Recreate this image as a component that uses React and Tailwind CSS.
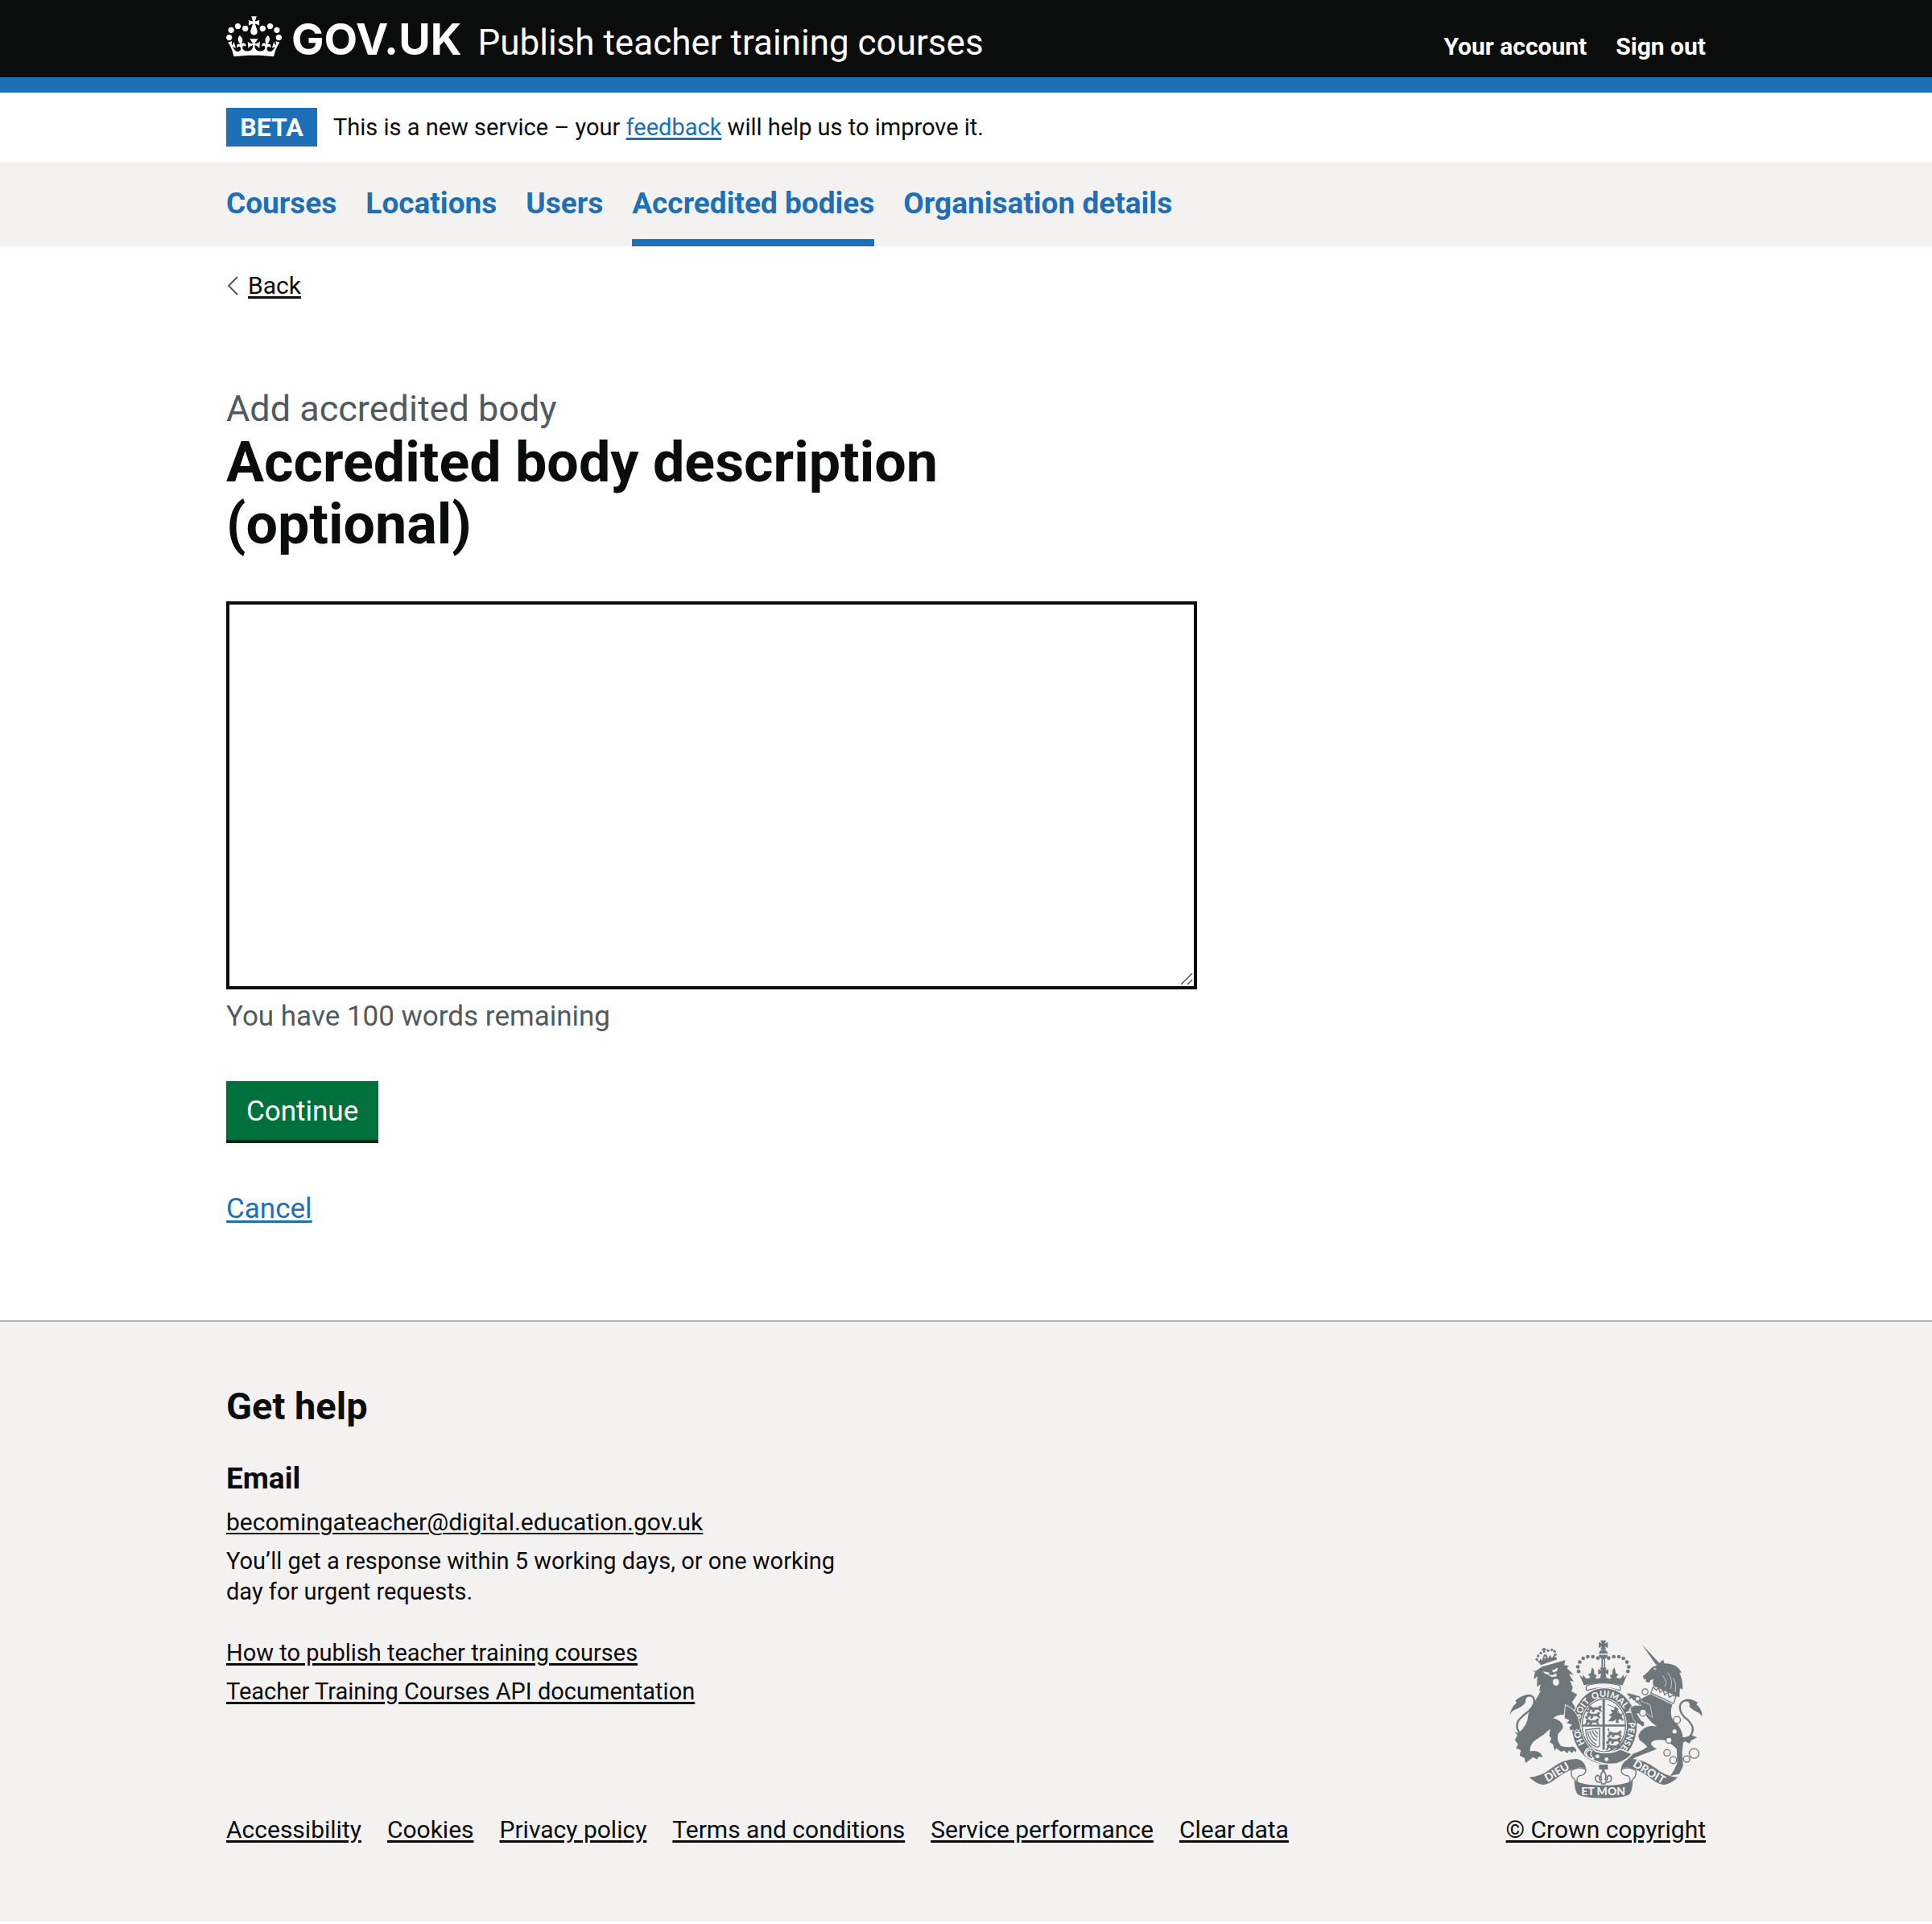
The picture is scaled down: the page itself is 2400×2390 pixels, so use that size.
import React from 'react';

const navItems = ['Courses', 'Locations', 'Users', 'Accredited bodies', 'Organisation details'];
const metaLinks = ['Accessibility', 'Cookies', 'Privacy policy', 'Terms and conditions', 'Service performance', 'Clear data'];

const linkLine = 'underline decoration-[3px] underline-offset-[3px]';
const wrap = 'mx-auto w-full max-w-[1838px]';

function Crown() {
  return (
    <svg aria-hidden="true" viewBox="0 0 132 97" className="h-[51px] w-[69px] shrink-0" fill="currentColor">
      <path fillRule="evenodd" d="M25 30.2c3.5 1.5 7.7-.2 9.1-3.7 1.5-3.6-.2-7.8-3.9-9.2-3.6-1.4-7.6.3-9.1 3.9-1.4 3.5.3 7.5 3.9 9zM9 39.5c3.6 1.5 7.8-.2 9.2-3.7 1.5-3.6-.2-7.8-3.9-9.1-3.6-1.5-7.6.2-9.1 3.8-1.4 3.5.3 7.5 3.8 9zM4.4 57.2c3.5 1.5 7.7-.2 9.1-3.8 1.5-3.6-.2-7.7-3.9-9.1-3.5-1.5-7.6.3-9.1 3.8-1.4 3.5.3 7.6 3.9 9.1zm38.3-21.4c3.5 1.5 7.7-.2 9.1-3.8 1.5-3.6-.2-7.7-3.9-9.1-3.6-1.5-7.6.3-9.1 3.8-1.3 3.6.4 7.7 3.9 9.1zm64.4-5.6c-3.6 1.5-7.8-.2-9.1-3.7-1.5-3.6.2-7.8 3.8-9.2 3.6-1.4 7.7.3 9.2 3.9 1.3 3.5-.4 7.5-3.9 9zm15.9 9.3c-3.6 1.5-7.7-.2-9.1-3.7-1.5-3.6.2-7.8 3.7-9.1 3.6-1.5 7.7.2 9.2 3.8 1.5 3.5-.3 7.5-3.8 9zm4.7 17.7c-3.6 1.5-7.8-.2-9.2-3.8-1.5-3.6.2-7.7 3.9-9.1 3.6-1.5 7.7.3 9.2 3.8 1.3 3.5-.4 7.6-3.9 9.1zM89.3 35.8c-3.6 1.5-7.8-.2-9.2-3.8-1.4-3.6.2-7.7 3.9-9.1 3.6-1.5 7.7.3 9.2 3.8 1.4 3.6-.3 7.7-3.9 9.1zM69.7 17.7l8.9 4.7V9.3l-8.9 2.8c-.2-.3-.5-.6-.9-.9L72.4 0H59.6l3.5 11.2c-.3.3-.6.5-.9.9l-8.8-2.8v13.1l8.8-4.7c.3.3.6.7.9.9l-5 15.4v.1c-.2.8-.4 1.6-.4 2.4 0 4.1 3.1 7.5 7 8.1h.2c.3 0 .7.1 1 .1.4 0 .7 0 1-.1h.2c4-.6 7.1-4.1 7.1-8.1 0-.8-.1-1.7-.4-2.4V34l-5.1-15.4c.4-.2.7-.6 1-.9zM66 92.8c16.9 0 32.8 1.1 47.1 3.2 4-16.9 8.9-26.7 14-33.5l-9.6-3.4c1 4.9 1.1 7.2 0 10.2-1.5-1.4-3-4.3-4.2-8.7L108.6 76c2.8-2 5-3.2 7.5-3.3-4.4 9.4-10 11.9-13.6 11.2-4.3-.8-6.3-4.6-5.6-7.9 1-4.7 5.7-5.9 8-.5 4.3-8.7-3-11.4-7.6-8.8 7.1-7.2 7.9-13.5 2.1-21.1-8 6.1-8.1 12.3-4.5 20.8-4.7-5.4-12.1-2.5-9.5 6.2 3.4-5.2 7.9-2 7.2 3.1-.6 4.3-6.4 7.8-13.5 7.2-10.3-.9-10.9-8-11.2-13.8 2.5-.5 7.1 1.8 11 7.3L80.2 60c-4.1 4.4-8 5.3-12.3 5.4 1.4-4.4 8-11.6 8-11.6H55.5s6.4 7.2 7.9 11.6c-4.2-.1-8-1-12.3-5.4l1.4 16.4c3.9-5.5 8.5-7.7 10.9-7.3-.3 5.8-.9 12.8-11.1 13.8-7.2.6-12.9-2.9-13.5-7.2-.7-5 3.8-8.3 7.1-3.1 2.7-8.7-4.6-11.6-9.4-6.2 3.7-8.5 3.6-14.7-4.6-20.8-5.8 7.6-5 13.9 2.2 21.1-4.7-2.6-11.9.1-7.7 8.8 2.3-5.5 7.1-4.2 8.1.5.7 3.3-1.3 7.1-5.7 7.9-3.5.7-9-1.8-13.5-11.2 2.5.1 4.7 1.3 7.5 3.3l-4.7-15.4c-1.2 4.4-2.7 7.2-4.3 8.7-1.1-3-.9-5.3 0-10.2l-9.5 3.4c5 6.9 9.9 16.7 14 33.5 14.8-2.1 30.8-3.2 47.7-3.2z" />
    </svg>
  );
}

const INK = '#6f777b';
const PAPER = '#f3f2f1';
const pearls = [[372, 126], [353, 121], [334, 121], [317, 127], [304, 141], [297, 159], [300, 176]];
const lionPearls = [[144, 131], [149, 118], [159, 108], [186, 98], [200, 95], [210, 101], [213, 113], [174, 117]];
const chain = [[520, 278, 9], [548, 252, 11], [540, 330, 13], [667, 357, 13], [658, 400, 10], [637, 433, 11], [630, 480, 12], [653, 507, 13], [703, 503, 12], [731, 482, 18]];
// Walking lion charge, drawn from its own origin.
const passant = 'M0 8l8-4 6 5h20l8-7 6 3-5 9 6 9h-7l-6-7-14 1-3 8h-7l2-9-8 1-4 8H-4l5-10zM2 4Q-8-4 2-8';

function Crest() {
  const motto = { fill: PAPER, fontFamily: 'Lato, sans-serif', fontWeight: 900, textAnchor: 'middle' };
  return (
    <svg aria-hidden="true" viewBox="42 58 720 592" className="h-[197px] w-[240px]" fill={INK}>
      {/* royal crown */}
      <path d="M381 60h22l-6 12 12-6v22l-12-6 6 12h-22l6-12-12 6V66l12 6z" />
      <path d="M375 110q2-14 17-15 15 1 17 15zM375 114h34q-1 10-10 13v42h-5v-38h-4v38h-5v-42q-9-3-10-13z" />
      {pearls.map(([x, y]) => (
        <g key={x}>
          <circle cx={x} cy={y} r="7" />
          <circle cx={784 - x} cy={y} r="7" />
        </g>
      ))}
      <path d="M302 186l18 42q72-18 144 0l18-42-13 14-2-12-9 13q-10 3-18-3l9-11-10-4-5-23-8 12 0 14-10 5 6 11q-9 3-18-2l-4-17 11 5v-21l-12 6 6-11h-26l6 11-12-6v21l11-5-4 17q-9 5-18 2l6-11-10-5v-14l-8-12-5 23-10 4 9 11q-8 6-18 3l-9-13-2 12z" />
      <path d="M330 247q-8-18 12-22 50-12 100 0 20 4 12 22-60-20-124 0z" fill={PAPER} stroke={INK} strokeWidth="4" />

      {/* lion */}
      <path d="M138 176l24-17 88-25-4 18 18 4-8 8 26 25-18-3 18 28-14-4 10 27-5 13 22 12-20 28 14 22 8 38 6 38-14 10-16-4-6-12 10-8-20-7 12-9-18-8 10-8q-30-12-56 8 40 12 36 38l-18 22q-6 24 10 44 30 8 42 2 18 2 16 22l-9-7-6 10-12-10-6 11-12-10-12 4-18-14-6 10-6-24-12-8 6-14-8-10 4-26q-24 24-52 40-26 18-24 44 40-6 48 22l-14-2-8 10-14-8-28 22-4-18-18-10 4-20-18-8 8-14-12-16 14-28q34-24 36-68 6-18 16-34l32-56-8 4 6-26-14 10 2-40-14 12 6-34-10 4z" />
      <path d="M166 176l22 4 4 8-16-3zM200 174l22-12-2 12-14 6zM184 188l18 2 14-8 2 12-18 3z" fill={PAPER} />
      <path d="M204 208q12-10 21 0 6 18-9 22-15-4-12-22z" fill={PAPER} />
      <path d="M155 142l62-20 2 10-62 21zM144 134l10 2 4-8 6 8 4-18 8 12 4-20 6 18 8-14 6 12 8-12 4 2-2 12-56 18z" />
      {lionPearls.map(([x, y]) => <circle key={x} cx={x} cy={y} r="5" />)}
      <path d="M166 88h9l-2 5 6-3v9l-6-2 3 9h-10l2-8-6 2v-8l6 2z" />
      <path d="M92 418Q58 390 76 358q16-18 38-34 30-28 16-52-12-12-34 2" fill="none" stroke={INK} strokeWidth="7" />
      <path d="M42 338q8-32 26-44l-4-10q30-24 60-22-26 8-22 30-16 20-38 26-12 4-22 20zM60 402l22 6 30-14-6 18-14 16-8-4z" />

      {/* unicorn */}
      <path d="M536 75l66 70-12 8z" />
      <path d="M590 154l26-22 4 14q50 0 64 36l-8-1q14 26 12 62l-10-4-2 34-96-42q-6-16 0-26l-12 3-4 10-14-4 2-10-8 2-4-12q20-16 34-34z" />
      <path d="M580 163l13 3-10 4z" fill={PAPER} />
      <path d="M612 190q24 26 8 44M632 180q24 30 10 62M652 200q16 24 8 52" fill="none" stroke={PAPER} strokeWidth="2" />
      <path d="M578 234l12 12 8-8 6 16 12-8 5 17 12-8 5 17 12-6 14 2-10 28-84-40z" fill={PAPER} stroke={INK} strokeWidth="4" />
      <path d="M568 260l82 40q-12 34 2 58 42 32 38 90l-4 30 4 50-14 30-34 8 14-22 12-26-2-52q-26-28-48-34-40-4-48 12 2 12 22 22l-54 20-32 14q-8 14-20 16l-4-10 10-22q36-4 64-26-10-14-28-26-14-20 14-42 20-16 50-8-42-30-52-66l-20-22-10-4z" />
      <path d="M690 438q44-24 34-58-10-20-30-34-22-24-14-48 14-22 38-8" fill="none" stroke={INK} strokeWidth="7" />
      <path d="M762 344q-2-30-22-44l4-8q-26-18-50-12 24 8 20 28 20 18 34 22zM672 418l22 4 28-8 20 8-22 12-6 12-18-10-12-2z" />

      {/* garter */}
      <ellipse cx="396" cy="380" rx="125" ry="145" fill={PAPER} />
      <ellipse cx="396" cy="380" rx="121" ry="141" />
      <ellipse cx="394" cy="378" rx="86" ry="103" fill={PAPER} />
      <path id="garter-line" d="M395 487A91 108 0 0 1 395 271A91 108 0 0 1 395 487" fill="none" />
      <g {...motto} fontSize="33">
        <text><textPath href="#garter-line" startOffset="18%">HO</textPath></text>
        <text><textPath href="#garter-line" startOffset="35%">SOIT</textPath></text>
        <text><textPath href="#garter-line" startOffset="48%">QUI</textPath></text>
        <text><textPath href="#garter-line" startOffset="61%">MAL Y</textPath></text>
        <text><textPath href="#garter-line" startOffset="81%">PENSE</textPath></text>
      </g>

      {/* shield */}
      <ellipse cx="394" cy="378" rx="81" ry="98" fill="none" stroke={INK} strokeWidth="4" />
      <path d="M389 280h9v188h-9zM313 374h162v8H313z" />
      {[[338, 302], [332, 326], [328, 350], [412, 396], [410, 420], [406, 444]].map(([x, y]) => (
        <path key={y} d={passant} transform={`translate(${x} ${y})`} stroke={INK} strokeWidth="2" />
      ))}
      <path d="M410 362l14-18-12-4 14-10-8-12 14 2 4-14 12 10-4 12 12 8 10-6-6 14 10 16-14-6-8 2 2 12h-12l2-14-12 8z" />
      <path d="M408 300q44 10 56 62" fill="none" stroke={INK} strokeWidth="3" />
      <path d="M326 394l52-6v66q-8 8-14 2-34-10-38-62z" stroke={INK} strokeWidth="4" fill="none" />
      <path d="M334 399q4 36 32 50M342 397q4 26 26 38M351 396q4 16 19 26M361 395q2 8 11 14" stroke={INK} strokeWidth="4" fill="none" />
      <path d="M322 482q8-28 30-18l12 10q50 14 92-8l44 18q-20 24-56 36-60 10-112-26z" stroke={PAPER} strokeWidth="5" />
      <path d="M328 484q4-20 22-12l-6 14 12 16q-20 4-28-18z" fill="none" stroke={PAPER} strokeWidth="4" />
      <circle cx="370" cy="493" r="7" fill={PAPER} />
      <circle cx="404" cy="504" r="7" fill={PAPER} />

      {/* forelegs resting on the garter */}
      <path d="M250 300q44 18 54 66l4 22-8 10-8-6-6 10-8-8-10 4-4-14 10-8-22-8 12-9-18-8z" stroke={PAPER} strokeWidth="3" />
      <path d="M566 300l-30-12-22-24-30-8-4 6 10 8-4 14 12-8 6 10 16-2 14 20-22-2-20 8 4 16 8 30 8 6-2 14 12-6 16 12 8-4-2-14-10-4-16-26 34-2 24 16z" stroke={PAPER} strokeWidth="2" />
      {chain.map(([x, y, r]) => <circle key={y} cx={x} cy={y} r={r} fill={PAPER} stroke={INK} strokeWidth="4" />)}

      {/* fleur-de-lis pendant */}
      <path d="M376 524h33v18h-10l-7 9-7-9h-9z" />
      <path d="M392 546q-14 16-6 34-4 4-9-2 4-14-8-14-10 6-4 20 6 8 18 4l4 8h11l4-8q12 4 18-4 6-14-4-20-12 0-8 14-5 6-9 2 8-18-7-34z" fill={PAPER} stroke={INK} strokeWidth="5" />

      {/* motto ribbon */}
      {[undefined, 'translate(786 0) scale(-1 1)'].map((flip, i) => (
        <g key={i} transform={flip}>
          <path d="M116 571q48-4 82-34 50-36 96-34 30 6 34 38-14-8-30-6-14 8-20 6-30 10-60 34-30 24-52 24-26-4-50-28z" />
          <path d="M328 541q-2 24-26 24-14 10-4 34M272 548q-2 22 14 32 6 16 4 28M272 548q24-20 54-6" fill="none" stroke={INK} strokeWidth="4" />
        </g>
      ))}
      <path d="M284 582q30 20 109 20t109-20q0 32-10 50-12 16-99 17-87-1-99-17-10-18-10-50z" />
      <g {...motto} fontSize="42">
        <text transform="translate(226 564) rotate(-31)">DIEU</text>
        <text transform="translate(556 563) rotate(31)">DROIT</text>
        <text x="392" y="638">ET MON</text>
      </g>
    </svg>
  );
}

export default function App() {
  return (
    <div className="bg-white font-[Roboto,sans-serif] text-[29px] leading-[38px] text-[#0b0c0c]">
      <header className="border-b-[19px] border-[#1d70b8] bg-[#0b0c0c] pt-5 pb-3.5 text-white">
        <div className={`${wrap} flex items-baseline justify-between`}>
          <div className="flex items-baseline gap-5">
            <a href="#home" className="flex items-start gap-3 font-[Inter,sans-serif] text-[54px] leading-[57px] font-bold">
              <Crown />
              <span className="self-baseline">GOV.UK</span>
            </a>
            <a href="#service" className="text-[44px] leading-[57px]">Publish teacher training courses</a>
          </div>
          <nav aria-label="Account" className="flex gap-9 text-[30px] font-bold">
            <a href="#account">Your account</a>
            <a href="#sign-out">Sign out</a>
          </nav>
        </div>
      </header>

      <div className={`${wrap} flex items-center gap-5 py-[19px] leading-[48px]`}>
        <strong className="w-[113px] bg-[#1d70b8] text-center text-[32px] text-white">BETA</strong>
        <p>
          This is a new service – your <a href="#feedback" className={`${linkLine} text-[#1d70b8]`}>feedback</a> will help us to improve it.
        </p>
      </div>

      <nav aria-label="Primary" className="bg-[#f3f2f1]">
        <ul className={`${wrap} flex gap-9 text-[37px] leading-[48px] font-bold text-[#1d70b8]`}>
          {navItems.map((item) => (
            <li key={item} className={`border-b-[9px] pt-7 pb-5 ${item === 'Accredited bodies' ? 'border-[#1d70b8]' : 'border-transparent'}`}>
              <a href="#section">{item}</a>
            </li>
          ))}
        </ul>
      </nav>

      <div className={wrap}>
        <a href="#back" className="mt-[30px] inline-flex items-center gap-3 text-[30px]">
          <svg aria-hidden="true" viewBox="0 0 15 24" className="h-6 w-[15px]" fill="none" stroke="#505a5f" strokeWidth="2">
            <path d="M14 1L3 12l11 11" />
          </svg>
          <span className={linkLine}>Back</span>
        </a>

        <main className="max-w-[1206px] pt-[104px] pb-[114px]">
          <form onSubmit={(e) => e.preventDefault()}>
            <span className="block text-[45px] leading-[56px] text-[#505a5f]">Add accredited body</span>
            <h1 className="max-w-[1000px] text-[70px] leading-[77px] font-bold">
              <label htmlFor="description">Accredited body description (optional)</label>
            </h1>
            <div className="relative mt-[57px]">
              <textarea id="description" aria-describedby="description-info" className="block h-[482px] w-full resize-none rounded-none border-4 border-[#0b0c0c] bg-white p-2 text-[35px] leading-[48px]" />
              <svg aria-hidden="true" viewBox="0 0 14 14" className="pointer-events-none absolute right-1.5 bottom-1.5 size-3.5" stroke="#555" strokeWidth="1.5">
                <path d="M0 14L14 0M8 14l6-6" />
              </svg>
            </div>
            <p id="description-info" className="mt-[10px] text-[35px] leading-[48px] text-[#505a5f]">You have 100 words remaining</p>
            <button type="submit" className="mt-[56px] block bg-[#00703c] px-[25px] pt-[14px] pb-[11px] text-[35px] leading-[48px] text-white shadow-[0_4px_0_#002d18]">Continue</button>
            <p className="mt-[62px] text-[35px] leading-[48px]">
              <a href="#cancel" className={`${linkLine} text-[#1d70b8]`}>Cancel</a>
            </p>
          </form>
        </main>
      </div>

      <footer className="border-t-2 border-[#b1b4b6] bg-[#f3f2f1] pt-[76px] pb-[95px]">
        <div className={`${wrap} flex items-end justify-between`}>
          <div>
            <h2 className="text-[47px] leading-[57px] font-bold">Get help</h2>
            <h3 className="mt-[38px] text-[37px] leading-[48px] font-bold">Email</h3>
            <ul className="mt-[11px] flex max-w-[800px] flex-col gap-[10px]">
              <li><a href="mailto:becomingateacher@digital.education.gov.uk" className="text-[30px] underline decoration-2 underline-offset-[3px]">becomingateacher@digital.education.gov.uk</a></li>
              <li>You’ll get a response within 5 working days, or one working day for urgent requests.</li>
            </ul>
            <ul className="mt-[38px] flex flex-col gap-[10px]">
              <li><a href="#guide" className={linkLine}>How to publish teacher training courses</a></li>
              <li><a href="#api" className={linkLine}>Teacher Training Courses API documentation</a></li>
            </ul>
            <ul className="mt-[134px] flex gap-8 text-[30px]">
              {metaLinks.map((item) => (
                <li key={item}><a href="#meta" className={linkLine}>{item}</a></li>
              ))}
            </ul>
          </div>
          <a href="#copyright" className={`${linkLine} flex flex-col items-center gap-5 text-[30px]`}>
            <Crest />
            © Crown copyright
          </a>
        </div>
      </footer>
    </div>
  );
}
